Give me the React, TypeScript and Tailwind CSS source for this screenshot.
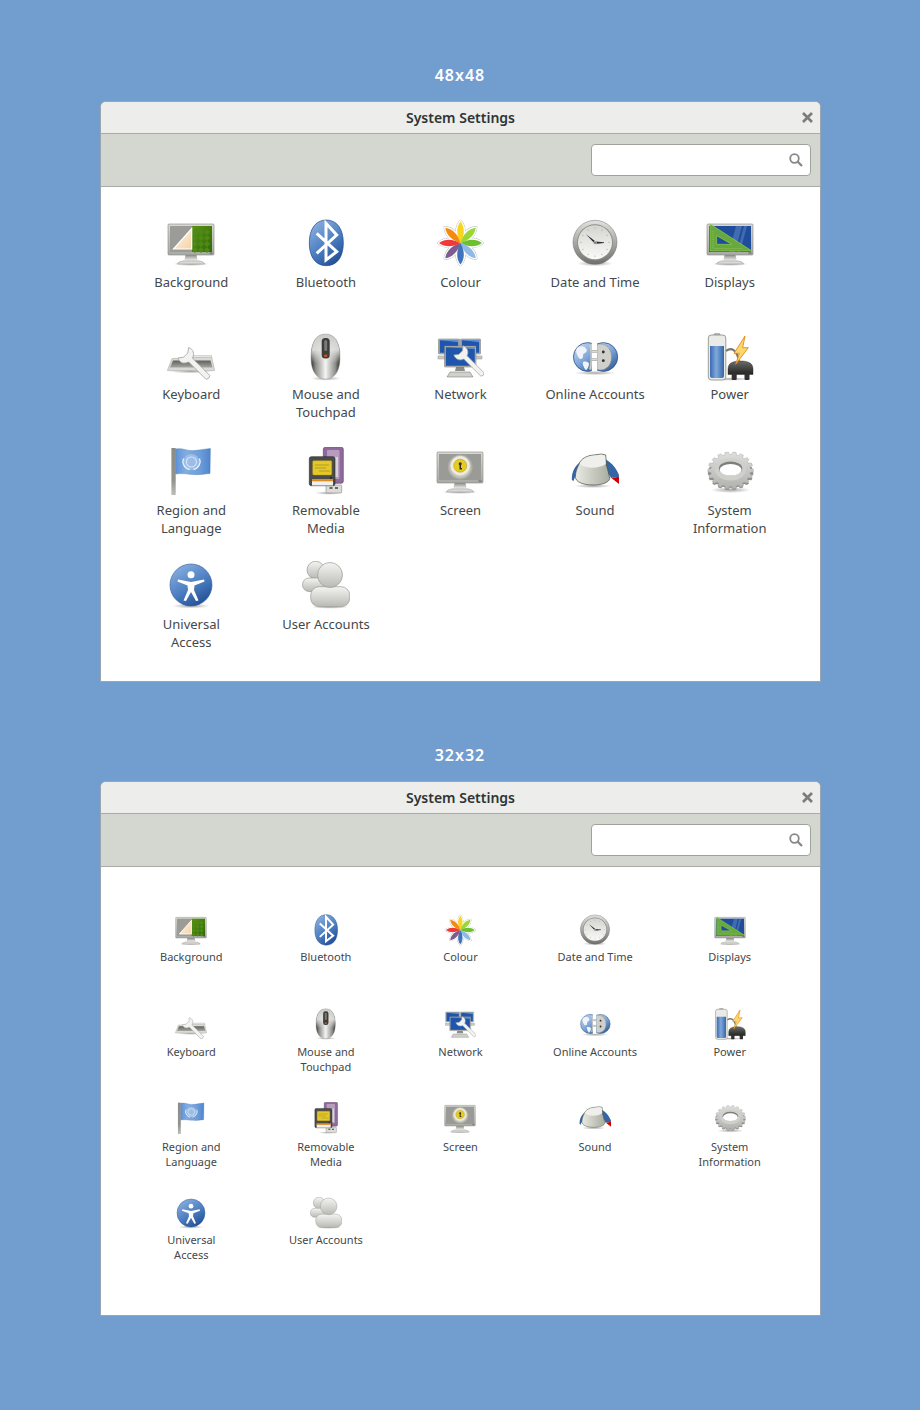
import React from 'react';

type IconProps = { className?: string };

const FONT = "font-['Noto_Sans','Open_Sans',sans-serif]";

// gear outline in perspective, computed once
const gearPath = (cx: number, cy: number, rx: number, ry: number, teeth: number) => {
    const pts: string[] = [];
    const step = (Math.PI * 2) / teeth;
    for (let i = 0; i < teeth; i++) {
        const a = i * step;
        const at = (da: number, k: number) =>
            `${(cx + Math.cos(a + da) * rx * k).toFixed(2)} ${(cy + Math.sin(a + da) * ry * k).toFixed(2)}`;
        pts.push(at(-step * 0.36, 0.87), at(-step * 0.2, 1), at(step * 0.2, 1), at(step * 0.36, 0.87));
    }
    return `M${pts.join('L')}Z`;
};

const Svg: React.FC<IconProps & { children: React.ReactNode }> = ({ className, children }) => (
    <svg viewBox="0 0 48 48" className={className}>
        {children}
    </svg>
);

const SharedDefs = () => (
    <svg className="absolute w-0 h-0" aria-hidden="true">
        <defs>
            <linearGradient id="frame" x1="0" y1="0" x2="0" y2="1">
                <stop offset="0" stopColor="#d8d8d4" />
                <stop offset="1" stopColor="#a9aaa6" />
            </linearGradient>
            <linearGradient id="foot" x1="0" y1="0" x2="0" y2="1">
                <stop offset="0" stopColor="#8d8e8a" />
                <stop offset="1" stopColor="#e6e6e3" />
            </linearGradient>
            <linearGradient id="blueDisc" x1="0.2" y1="0" x2="0.8" y2="1">
                <stop offset="0" stopColor="#8ab0e0" />
                <stop offset="0.55" stopColor="#4a7cc0" />
                <stop offset="1" stopColor="#1f4a8f" />
            </linearGradient>
            <linearGradient id="globe" x1="0.1" y1="0" x2="0.9" y2="1">
                <stop offset="0" stopColor="#c9daf0" />
                <stop offset="0.5" stopColor="#7fa5d8" />
                <stop offset="1" stopColor="#28548f" />
            </linearGradient>
            <linearGradient id="silver" x1="0" y1="0" x2="0" y2="1">
                <stop offset="0" stopColor="#e2e2df" />
                <stop offset="1" stopColor="#6f706c" />
            </linearGradient>
            <linearGradient id="face" x1="0" y1="0" x2="0" y2="1">
                <stop offset="0" stopColor="#d4d4d0" />
                <stop offset="1" stopColor="#fafaf8" />
            </linearGradient>
            <linearGradient id="mouseBody" x1="0" y1="0" x2="1" y2="0">
                <stop offset="0" stopColor="#2e2e2b" />
                <stop offset="0.16" stopColor="#8d8d8a" />
                <stop offset="0.5" stopColor="#f4f4f3" />
                <stop offset="0.84" stopColor="#8d8d8a" />
                <stop offset="1" stopColor="#2e2e2b" />
            </linearGradient>
            <linearGradient id="mouseTop" x1="0" y1="0" x2="0" y2="1">
                <stop offset="0" stopColor="#c8c8c6" />
                <stop offset="0.35" stopColor="#e4e4e2" stopOpacity="0.9" />
                <stop offset="0.65" stopColor="#e4e4e2" stopOpacity="0" />
            </linearGradient>
            <linearGradient id="person" x1="0" y1="0" x2="0" y2="1">
                <stop offset="0" stopColor="#f4f4f2" />
                <stop offset="1" stopColor="#b9b9b4" />
            </linearGradient>
            <linearGradient id="knob" x1="0" y1="0" x2="1" y2="0">
                <stop offset="0" stopColor="#e9eae3" />
                <stop offset="1" stopColor="#a9ac9f" />
            </linearGradient>
            <linearGradient id="batt" x1="0" y1="0" x2="1" y2="0">
                <stop offset="0" stopColor="#3b6cb0" />
                <stop offset="0.45" stopColor="#7fa8dc" />
                <stop offset="1" stopColor="#3466a8" />
            </linearGradient>
            <linearGradient id="plug" x1="0" y1="0" x2="0" y2="1">
                <stop offset="0" stopColor="#6b6c68" />
                <stop offset="1" stopColor="#232321" />
            </linearGradient>
            <linearGradient id="flag" x1="0" y1="0" x2="1" y2="0">
                <stop offset="0" stopColor="#5f93d8" />
                <stop offset="0.3" stopColor="#82addf" />
                <stop offset="0.7" stopColor="#6d9ddb" />
                <stop offset="1" stopColor="#4f86cc" />
            </linearGradient>
            <linearGradient id="poleFade" x1="0" y1="0" x2="0" y2="1">
                <stop offset="0" stopColor="#8a8b87" />
                <stop offset="0.7" stopColor="#92938f" />
                <stop offset="1" stopColor="#92938f" stopOpacity="0.6" />
            </linearGradient>
            <linearGradient id="gearTop" x1="0" y1="0" x2="0" y2="1">
                <stop offset="0" stopColor="#dededc" />
                <stop offset="1" stopColor="#b1b1ae" />
            </linearGradient>
            <linearGradient id="kbTop" x1="0" y1="0" x2="0" y2="1">
                <stop offset="0" stopColor="#5f605b" />
                <stop offset="1" stopColor="#a6a7a2" />
            </linearGradient>
            <linearGradient id="peach" x1="0" y1="0" x2="1" y2="1">
                <stop offset="0" stopColor="#fff6ea" />
                <stop offset="1" stopColor="#f5d3a8" />
            </linearGradient>
            <linearGradient id="wall" x1="0" y1="0" x2="1" y2="1">
                <stop offset="0" stopColor="#5a9216" />
                <stop offset="1" stopColor="#2f6a08" />
            </linearGradient>
            <radialGradient id="shadow">
                <stop offset="0" stopColor="#000" stopOpacity="0.35" />
                <stop offset="1" stopColor="#000" stopOpacity="0" />
            </radialGradient>
            <radialGradient id="lockGlow">
                <stop offset="0.6" stopColor="#f2f1e4" stopOpacity="0.8" />
                <stop offset="1" stopColor="#f2f1e4" stopOpacity="0" />
            </radialGradient>
            <clipPath id="leftHalf">
                <rect x="0" y="0" width="20.700" height="48" />
            </clipPath>
            <clipPath id="rightHalf">
                <rect x="26" y="0" width="22" height="48" />
            </clipPath>
        </defs>
    </svg>
);

const Monitor: React.FC<{ children?: React.ReactNode }> = ({ children }) => (
    <g>
        <ellipse cx="24" cy="45" rx="18" ry="2" fill="url(#shadow)" />
        <path d="M18.500 36h11l1 5h-13z" fill="url(#foot)" />
        <path d="M10.500 45c0-2 5-3.200 8-3.200h11c3 0 8 1.200 8 3.200z" fill="#d9d9d6" stroke="#8d8e8a" strokeWidth="0.5" />
        <rect x="1" y="5" width="46" height="31" rx="1" fill="url(#frame)" stroke="#85867f" strokeWidth="0.6" />
        <rect x="42.500" y="33.600" width="3" height="0.9" fill="#55564f" />
        {children}
    </g>
);

const Wrench: React.FC<{ x: number; y: number; s?: number; sx?: number }> = ({ x, y, s = 1, sx }) => (
    <path
        transform={`translate(${x} ${y}) rotate(-45) scale(${sx ?? s} ${s})`}
        d="M-1.800 6L-1.800 29Q0 31 1.800 29L1.800 6C5 4.500 6.500 1 5-3.500L2-.5L-2-.5L-5-3.500C-6.500 1-5 4.500-1.800 6Z"
        fill="#f2f2f0"
        stroke="#a4a5a0"
        strokeWidth="0.6"
    />
);

const DIAMONDS = [28, 34, 40].flatMap((x) => [10, 16, 22, 28].map((y) => `M${x} ${y}l3 3-3 3-3-3z`)).join('');

const BackgroundIcon = (p: IconProps) => (
    <Svg {...p}>
        <Monitor>
            <rect x="3" y="7" width="22" height="26" fill="#9b9c97" />
            <rect x="25" y="7" width="20" height="26" fill="url(#wall)" />
            <path d={DIAMONDS} fill="#4f8a16" />
            <path d="M6.500 30L24.700 9.500V30z" fill="url(#peach)" stroke="#fff" strokeWidth="1.200" />
        </Monitor>
    </Svg>
);

const BluetoothIcon = (p: IconProps) => (
    <Svg {...p}>
        <path d="M24.300 1C35 1 41.300 10 41.300 24S35 46.700 24.300 46.700 7.300 38 7.300 24 13.600 1 24.300 1Z" fill="url(#blueDisc)" stroke="#1f4a8f" strokeWidth="0.7" />
        <path d="M14.700 14.300L34.700 32.700 24 41V4.300L34.700 16 14.700 34.300" fill="none" stroke="#fff" strokeWidth="3" />
    </Svg>
);

const PETALS = ['#f7d51e', '#9ad637', '#6cc02e', '#8fb9e6', '#3f74bb', '#7f5b8e', '#ef3a3a', '#f58a13'];
const COLOUR_PETAL = 'M0 0C3.800-7 5-15 0-21.500C-5-15-3.800-7 0 0Z';

const ColourIcon = (p: IconProps) => (
    <Svg {...p}>
        <g transform="translate(24.500 24)">
            {PETALS.map((_, i) => (
                <path key={i} d={COLOUR_PETAL} transform={`rotate(${i * 45})`} fill="#fff" stroke="#b9bab6" strokeWidth="3.400" strokeLinejoin="round" />
            ))}
            {PETALS.map((_, i) => (
                <path key={i} d={COLOUR_PETAL} transform={`rotate(${i * 45})`} fill="#fff" stroke="#fff" strokeWidth="2.600" strokeLinejoin="round" />
            ))}
            {PETALS.map((c, i) => (
                <path key={i} d={COLOUR_PETAL} transform={`rotate(${i * 45})`} fill={c} />
            ))}
        </g>
    </Svg>
);

const ClockIcon = (p: IconProps) => (
    <Svg {...p}>
        <ellipse cx="24" cy="44.500" rx="18" ry="2.800" fill="url(#shadow)" />
        <circle cx="24" cy="23.300" r="22" fill="url(#silver)" stroke="#6f706c" strokeWidth="0.5" />
        <circle cx="24" cy="23.300" r="18" fill="#8f908c" />
        <circle cx="24" cy="23.300" r="17" fill="url(#face)" />
        {[0, 30, 60, 90, 120, 150, 180, 210, 240, 270, 300, 330].map((a) => (
            <rect key={a} x="23.700" y="8.500" width="0.6" height="1.600" fill="#a0a09c" transform={`rotate(${a} 24 23.300)`} />
        ))}
        <path d="M15 15.300L24.700 22.600 33 23.300 33 24 24 25Z" fill="#2e3436" />
        <circle cx="24" cy="23.800" r="1.500" fill="#777" stroke="#eee" strokeWidth="0.5" />
    </Svg>
);

const DisplaysIcon = (p: IconProps) => (
    <Svg {...p}>
        <Monitor>
            <rect x="3" y="7" width="42" height="26" fill="#1f4d9b" />
            <path d="M30 7h6l-7 26h-6zM38 7h3l-7 26h-3z" fill="#5d86c4" opacity="0.55" />
            <path d="M4 5L46 32H4ZM10.700 16.700V25.300H25.700Z" fill="#69a83c" fillRule="evenodd" stroke="#8fd14f" strokeWidth="0.7" />
            <path d="M7 12V29.500H37" fill="none" stroke="#a7d47e" strokeWidth="0.5" strokeDasharray="1 1" />
        </Monitor>
    </Svg>
);

const KeyboardIcon = (p: IconProps) => (
    <Svg {...p}>
        <ellipse cx="24" cy="38.500" rx="23" ry="1.800" fill="url(#shadow)" />
        <path d="M5 25.500L44.500 23.500 47.700 37.500H0.400Z" fill="#d9d9d6" stroke="#a3a49f" strokeWidth="0.5" />
        <path d="M6 27.500H43.500L45.500 34.500H3Z" fill="url(#kbTop)" />
        <path d="M26 22.500H44.500L44.800 24.500H26Z" fill="#e6e6e3" stroke="#a9aaa5" strokeWidth="0.4" />
        <Wrench x={19} y={22.500} s={1.07} sx={1.5} />
    </Svg>
);

const MOUSE_BODY = 'M23.500 1C32 1 37.500 8 38 22C38.500 36 34 46 23.500 46S8.500 36 9 22C9.500 8 15 1 23.500 1Z';

const MouseIcon = (p: IconProps) => (
    <Svg {...p}>
        <ellipse cx="24" cy="45.500" rx="15" ry="2.200" fill="url(#shadow)" />
        <path d={MOUSE_BODY} fill="url(#mouseBody)" />
        <path d={MOUSE_BODY} fill="url(#mouseTop)" stroke="#8d8e8a" strokeWidth="0.4" />
        <rect x="19.700" y="5" width="8" height="20.500" rx="3.500" fill="#3d3d3a" />
        <rect x="22.200" y="7" width="3" height="11" rx="1.500" fill="#7a7a77" />
        <rect x="22" y="21.500" width="3.400" height="2.500" rx="1" fill="#c9501a" />
    </Svg>
);

const MiniScreen: React.FC<{ x: number; y: number; w: number; h: number }> = ({ x, y, w, h }) => (
    <g>
        <rect x={x} y={y} width={w} height={h} rx="0.5" fill="#b9bab5" stroke="#6d6e69" strokeWidth="0.5" />
        <rect x={x + 1.2} y={y + 1.2} width={w - 2.4} height={h - 2.4} fill="#1f56ad" />
        <path d={`M${x + 1.2} ${y + 1.2}H${x + w - 1.2}V${y + 3}Z`} fill="#6f9ad8" />
    </g>
);

const NetworkIcon = (p: IconProps) => (
    <Svg {...p}>
        <MiniScreen x={2.500} y={6} w={21} h={15} />
        <rect x="2" y="23" width="9" height="3" fill="#c9cac5" stroke="#808178" strokeWidth="0.4" />
        <MiniScreen x={24.500} y={6} w={20} h={15} />
        <rect x="38" y="23" width="8" height="3" fill="#c9cac5" stroke="#808178" strokeWidth="0.4" />
        <path d="M20 34h8l1 4h-10z" fill="#8c8d88" />
        <path d="M11 44l3-5h20l3 5z" fill="#d0d1cc" stroke="#6d6e69" strokeWidth="0.5" />
        <MiniScreen x={8.500} y={13} w={31.500} h={21} />
        <Wrench x={25} y={20} s={1.05} sx={1.3} />
    </Svg>
);

const OnlineIcon = (p: IconProps) => (
    <Svg {...p}>
        <ellipse cx="24" cy="40" rx="21" ry="2.200" fill="url(#shadow)" />
        <rect x="19" y="17.200" width="8.500" height="2.200" fill="#d9d9d5" stroke="#7d7e79" strokeWidth="0.4" />
        <rect x="19" y="25.600" width="8.500" height="2.200" fill="#d9d9d5" stroke="#7d7e79" strokeWidth="0.4" />
        <g clipPath="url(#leftHalf)">
            <circle cx="16.800" cy="24" r="14.400" fill="url(#globe)" stroke="#2a568f" strokeWidth="0.8" />
            <path d="M6 15c3-2.500 7-2 9 .5s0 4-2 5 0 4-2 5-3 0-4-2-3-6-1-8.500ZM12 29c3-1 6 0 6 2s-2 6-3 6-4-6-3-8Z" fill="#f0f3f7" />
            <path d="M19 12C21 16 20.700 32 19 36.500" fill="none" stroke="#c9cac5" strokeWidth="2" />
        </g>
        <g clipPath="url(#rightHalf)">
            <circle cx="32.300" cy="24" r="14.400" fill="url(#globe)" stroke="#2a568f" strokeWidth="0.8" />
            <path d="M26 11.500C33 9.500 40.500 14 40.500 24S33 38.500 26 36.500Z" fill="#cfcfcb" stroke="#8a8b86" strokeWidth="0.5" />
            <circle cx="32.300" cy="19" r="1.400" fill="#2e2e2c" />
            <circle cx="32.300" cy="27.700" r="1.400" fill="#2e2e2c" />
        </g>
    </Svg>
);

const PowerIcon = (p: IconProps) => (
    <Svg {...p}>
        <ellipse cx="24" cy="46" rx="23" ry="1.800" fill="url(#shadow)" />
        <rect x="8" y="0.500" width="6" height="3" rx="1" fill="#b7b8b3" stroke="#7d7e79" strokeWidth="0.4" />
        <rect x="2.300" y="2" width="17.500" height="45" rx="3" fill="#eaeae7" stroke="#7a7b76" strokeWidth="0.7" />
        <path d="M4 13h14v30a2 2 0 0 1-2 2H6a2 2 0 0 1-2-2Z" fill="url(#batt)" />
        <path d="M20 18C25 14 31 16 33 29" fill="none" stroke="#777873" strokeWidth="2" />
        <path d="M22 36C22 30 27 28 34.500 28S47 30 47 36V41.500H22Z" fill="url(#plug)" stroke="#1e1e1c" strokeWidth="0.4" />
        <rect x="25.700" y="40" width="5" height="7" rx="1" fill="#30302e" />
        <rect x="38.500" y="40" width="5" height="7" rx="1" fill="#30302e" />
        <path d="M39 3L28 20.300H33.300L29.700 31.300L42.300 14.700H36.700Z" fill="#fcd66e" stroke="#e58a13" strokeWidth="0.9" strokeLinejoin="round" />
    </Svg>
);

const RegionIcon = (p: IconProps) => (
    <Svg {...p}>
        <path d="M4.400 1H8.700V48H4.400Z" fill="url(#poleFade)" />
        <path d="M8.700 2C16 0.500 20 4.500 28 3.500 34 2.800 39 2 43.400 1.500L43 26.500C37 27 33 28 26 27.500 19 27 15 26 8.700 27Z" fill="url(#flag)" stroke="#3d6fb0" strokeWidth="0.4" />
        <circle cx="24.400" cy="15" r="8" fill="#a9c6eb" opacity="0.7" />
        <circle cx="24.400" cy="15" r="5" fill="none" stroke="#e6eef8" strokeWidth="1.100" opacity="0.8" />
        <path d="M16.500 11.500c-2 4.500 1 10 6 11M32.500 11.500c2 4.500-1 10-6 11" fill="none" stroke="#eef4fb" strokeWidth="1.300" />
    </Svg>
);

const RemovableIcon = (p: IconProps) => (
    <Svg {...p}>
        <ellipse cx="26" cy="46" rx="13" ry="1.800" fill="url(#shadow)" />
        <rect x="21.300" y="0.300" width="20" height="36" rx="2" fill="#8e6a9c" stroke="#5c3566" strokeWidth="0.6" />
        <rect x="25" y="3" width="12.500" height="29" rx="1" fill="#b79cc0" />
        <rect x="28" y="10" width="8" height="20" fill="#d7d3d6" />
        <rect x="24" y="38" width="15.700" height="8" rx="1" fill="#dcdcd9" stroke="#777873" strokeWidth="0.5" />
        <rect x="27.500" y="40" width="3" height="2" fill="#666" />
        <rect x="33" y="40" width="3" height="2" fill="#666" />
        <rect x="7.300" y="9.700" width="25.700" height="29" rx="2" fill="#4b4c49" stroke="#2a2a28" strokeWidth="0.6" />
        <rect x="10.700" y="13.700" width="19" height="14.300" rx="1" fill="#e3c72b" stroke="#c19e12" strokeWidth="0.4" />
        <path d="M13 18H27M13 21H24M17 24H28" stroke="#8f8022" strokeWidth="0.6" />
        <circle cx="29" cy="30.800" r="0.9" fill="#1c1c1a" />
        <rect x="10" y="32.500" width="21" height="6" fill="#f0f0ec" />
        <rect x="10" y="32.500" width="21" height="1.800" fill="#e08a22" />
    </Svg>
);

const ScreenIcon = (p: IconProps) => (
    <Svg {...p}>
        <Monitor>
            <rect x="3" y="7" width="42" height="26" fill="#9a9b96" />
            <circle cx="24.200" cy="20" r="13" fill="url(#lockGlow)" />
            <circle cx="24.200" cy="18.700" r="10" fill="#ecebdc" stroke="#c2c1b3" strokeWidth="0.5" />
            <circle cx="24.200" cy="18.700" r="6.500" fill="#e6cc22" stroke="#a8900f" strokeWidth="0.5" />
            <circle cx="24.200" cy="16.800" r="1.500" fill="#2e2e2c" />
            <path d="M23.500 17.500H25V21H26V22.500H23.500Z" fill="#2e2e2c" />
        </Monitor>
    </Svg>
);

const SoundIcon = (p: IconProps) => (
    <Svg {...p}>
        <ellipse cx="22" cy="39" rx="19" ry="2" fill="url(#shadow)" />
        <path d="M0.900 33C0 22 8 12 22 10 35 9 44 17 48.700 29.700L40 31C37 24 30 19 22 19 13 19 6 23 2.500 34Z" fill="#3465a4" />
        <path d="M40.400 31L48.700 29.700 48 37Z" fill="#cc0000" />
        <path d="M8 17C10 11.500 16 8.500 23 8L30.400 7 34.700 8 35.400 18C36.500 22 38 27 38.700 31.300 38.500 35 32 38 22 38 12 38 4.400 35 4.400 29.700 4.400 25 6 21 8 17Z" fill="url(#knob)" stroke="#4a4b46" strokeWidth="0.7" strokeLinejoin="round" />
        <path d="M8.800 17C10.500 12 16.500 9 23 8.600L30.400 7.600 34.200 8.500 34.800 17C28 22 14 22 8.800 17Z" fill="#efefeb" />
    </Svg>
);

const GearIcon = (p: IconProps) => (
    <Svg {...p}>
        <ellipse cx="24.600" cy="43" rx="20" ry="3" fill="url(#shadow)" />
        <path d={gearPath(24.600, 26.500, 22.800, 16.500, 18)} fill="#8f908b" />
        <path d={gearPath(24.600, 23.500, 22.800, 18.500, 18)} fill="url(#gearTop)" stroke="#9a9b96" strokeWidth="0.4" />
        <ellipse cx="24.600" cy="22.500" rx="15.500" ry="11" fill="#cfcfcc" />
        <ellipse cx="24.600" cy="21.500" rx="11.700" ry="6.900" fill="#7e7f7a" />
        <ellipse cx="24.600" cy="22.800" rx="11" ry="5.800" fill="#fff" />
    </Svg>
);

const UniversalIcon = (p: IconProps) => (
    <Svg {...p}>
        <ellipse cx="24" cy="45" rx="19" ry="2.500" fill="url(#shadow)" />
        <circle cx="24" cy="24" r="21" fill="url(#blueDisc)" stroke="#2a5a9f" strokeWidth="0.6" />
        <circle cx="24" cy="13.700" r="3.500" fill="#fff" />
        <path d="M11 18.500L24 21 37 18.500 37.500 20.500 27.500 24.500 27 29 31.500 39.500 29 40 24 31 19 40 16.500 39.500 21 29 20.500 24.500 10.500 20.500Z" fill="#fff" />
    </Svg>
);

const UserIcon = (p: IconProps) => (
    <Svg {...p}>
        <ellipse cx="28" cy="46" rx="19" ry="1.800" fill="url(#shadow)" />
        <circle cx="13.700" cy="9" r="8.700" fill="url(#person)" stroke="#9a9b96" strokeWidth="0.7" />
        <rect x="0.500" y="17" width="22" height="13.500" rx="6.500" fill="url(#person)" stroke="#9a9b96" strokeWidth="0.7" />
        <rect x="8.700" y="25.700" width="39" height="20" rx="8.500" fill="url(#person)" stroke="#9a9b96" strokeWidth="0.7" />
        <circle cx="28" cy="14" r="12.500" fill="url(#person)" stroke="#9a9b96" strokeWidth="0.7" />
    </Svg>
);

const ITEMS: { label: string[]; Icon: (p: IconProps) => React.JSX.Element }[] = [
    { label: ['Background'], Icon: BackgroundIcon },
    { label: ['Bluetooth'], Icon: BluetoothIcon },
    { label: ['Colour'], Icon: ColourIcon },
    { label: ['Date and Time'], Icon: ClockIcon },
    { label: ['Displays'], Icon: DisplaysIcon },
    { label: ['Keyboard'], Icon: KeyboardIcon },
    { label: ['Mouse and', 'Touchpad'], Icon: MouseIcon },
    { label: ['Network'], Icon: NetworkIcon },
    { label: ['Online Accounts'], Icon: OnlineIcon },
    { label: ['Power'], Icon: PowerIcon },
    { label: ['Region and', 'Language'], Icon: RegionIcon },
    { label: ['Removable', 'Media'], Icon: RemovableIcon },
    { label: ['Screen'], Icon: ScreenIcon },
    { label: ['Sound'], Icon: SoundIcon },
    { label: ['System', 'Information'], Icon: GearIcon },
    { label: ['Universal', 'Access'], Icon: UniversalIcon },
    { label: ['User Accounts'], Icon: UserIcon },
];

const LARGE_GAPS = ['mt-1.5', 'mt-1', 'mt-1.5', 'mt-1.5'];
const SMALL_GAPS = ['mt-[3px]', 'mt-1', 'mt-[5px]', 'mt-[3px]'];

const SettingsWindow: React.FC<{ large: boolean }> = ({ large }) => {
    const gaps = large ? LARGE_GAPS : SMALL_GAPS;
    return (
        <div className="ml-[100px] w-[721px] rounded-t-[6px] border border-[#9aa5b2] bg-white overflow-hidden">
            <div className="relative h-[32px] flex items-center justify-center bg-[#ededeb] border-b border-[#a9aba6]">
                <span className="text-[14px] font-semibold text-[#2e3436]">System Settings</span>
                <svg viewBox="0 0 11 11" className="absolute right-[7px] top-[10px] w-[11px] h-[11px]">
                    <path d="M1 1L10 10M10 1L1 10" stroke="#7b7d7b" strokeWidth="2.700" />
                </svg>
            </div>
            <div className="h-[53px] flex items-center justify-end pr-[9px] bg-[#d3d7cf] border-b border-[#a9aba6]">
                <div className="w-[220px] h-[32px] flex items-center justify-end pr-[7px] bg-white rounded-[4px] border border-[#a0a39c]">
                    <svg viewBox="0 0 14 14" className="w-[14px] h-[14px]">
                        <circle cx="5.500" cy="5.500" r="4.300" fill="none" stroke="#868886" strokeWidth="1.800" />
                        <path d="M8.500 8.500L13 13" stroke="#868886" strokeWidth="2.300" />
                    </svg>
                </div>
            </div>
            <div
                className={
                    large
                        ? 'grid grid-cols-5 grid-rows-[114px_114px_114px_114px] px-[23px] pt-[32px] pb-[6px]'
                        : 'grid grid-cols-5 grid-rows-[94px_94px_95px_94px] px-[23px] pt-[47px] pb-[24px]'
                }
            >
                {ITEMS.map(({ label, Icon }, i) => (
                    <div key={label.join(' ')} className="flex flex-col items-center">
                        <Icon className={large ? 'w-12 h-12 shrink-0' : 'w-8 h-8 shrink-0'} />
                        <div
                            className={`${gaps[Math.floor(i / 5)]} text-center text-[#44484a] ${
                                large ? 'text-[13px] leading-[18px]' : 'text-[11px] leading-[15px]'
                            }`}
                        >
                            {label.map((line) => (
                                <div key={line}>{line}</div>
                            ))}
                        </div>
                    </div>
                ))}
            </div>
        </div>
    );
};

const App: React.FC = () => (
    <div className={`${FONT} relative w-[920px] h-[1410px] bg-[#729dcf] pt-[66px] overflow-hidden`}>
        <SharedDefs />
        <div className="h-[18px] leading-[18px] text-center text-[16px] font-semibold tracking-[1px] text-white">48x48</div>
        <div className="mt-[17px]">
            <SettingsWindow large />
        </div>
        <div className="mt-[64px] h-[18px] leading-[18px] text-center text-[16px] font-semibold tracking-[1px] text-white">32x32</div>
        <div className="mt-[17px]">
            <SettingsWindow large={false} />
        </div>
    </div>
);

export default App;
